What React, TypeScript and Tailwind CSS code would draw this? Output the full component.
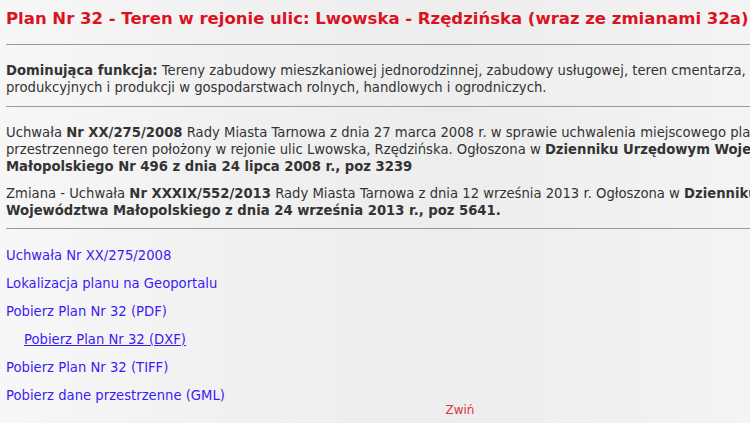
import React from "react";

const font = { fontFamily: '"DejaVu Sans", Verdana, sans-serif' };

export default function App() {
  return (
    <div
      className="w-[750px] h-[423px] overflow-hidden bg-[linear-gradient(90deg,#f7f7f7_0%,#f1f1f1_30%,#ededed_60%,#f1f1f1_85%,#f4f4f4_100%)] text-[#333]"
      style={font}
    >
      <div className="w-[1200px] pl-[6px] pt-[9px]">
        <h1 className="text-[16.5px] leading-[20px] font-bold text-[#d9141f] whitespace-nowrap">
          Plan Nr 32 - Teren w rejonie ulic: Lwowska - Rzędzińska (wraz ze zmianami 32a)
        </h1>
        <hr className="mt-[15px] w-[1000px] border-0 border-t border-[#9a9a9a]" />
        <p className="mt-[17px] text-[13.2px] leading-[17px] whitespace-nowrap">
          <b>Dominująca funkcja:</b> Tereny zabudowy mieszkaniowej jednorodzinnej, zabudowy usługowej, teren cmentarza, tereny upraw rolnych, sadowniczych,
          <br />
          produkcyjnych i produkcji w gospodarstwach rolnych, handlowych i ogrodniczych.
        </p>
        <hr className="mt-[10px] w-[1000px] border-0 border-t border-[#9a9a9a]" />
        <p className="mt-[17px] text-[13.2px] leading-[17px] whitespace-nowrap">
          Uchwała <b>Nr XX/275/2008</b> Rady Miasta Tarnowa z dnia 27 marca 2008 r. w sprawie uchwalenia miejscowego planu zagospodarowania
          <br />
          przestrzennego teren położony w rejonie ulic Lwowska, Rzędzińska. Ogłoszona w <b>Dzienniku Urzędowym Województwa</b>
          <br />
          <b>Małopolskiego Nr 496 z dnia 24 lipca 2008 r., poz 3239</b>
        </p>
        <p className="mt-[10px] text-[13.2px] leading-[17px] whitespace-nowrap">
          Zmiana - Uchwała <b>Nr XXXIX/552/2013</b> Rady Miasta Tarnowa z dnia 12 września 2013 r. Ogłoszona w <b>Dzienniku Urzędowym</b>
          <br />
          <b>Województwa Małopolskiego z dnia 24 września 2013 r., poz 5641.</b>
        </p>
        <hr className="mt-[9px] w-[1000px] border-0 border-t border-[#9a9a9a]" />
        <div className="mt-[18px] flex flex-col gap-[11px] text-[13.2px] leading-[17px] text-[#3a1cf5]">
          <a href="#" className="w-fit">Uchwała Nr XX/275/2008</a>
          <a href="#" className="w-fit">Lokalizacja planu na Geoportalu</a>
          <a href="#" className="w-fit">Pobierz Plan Nr 32 (PDF)</a>
          <a href="#" className="w-fit ml-[18px] underline">Pobierz Plan Nr 32 (DXF)</a>
          <a href="#" className="w-fit">Pobierz Plan Nr 32 (TIFF)</a>
          <a href="#" className="w-fit">Pobierz dane przestrzenne (GML)</a>
        </div>
        <div className="w-[908px] text-center -mt-[1px] text-[12px] leading-[14px] text-[#e0323c]">
          Zwiń
        </div>
      </div>
    </div>
  );
}
